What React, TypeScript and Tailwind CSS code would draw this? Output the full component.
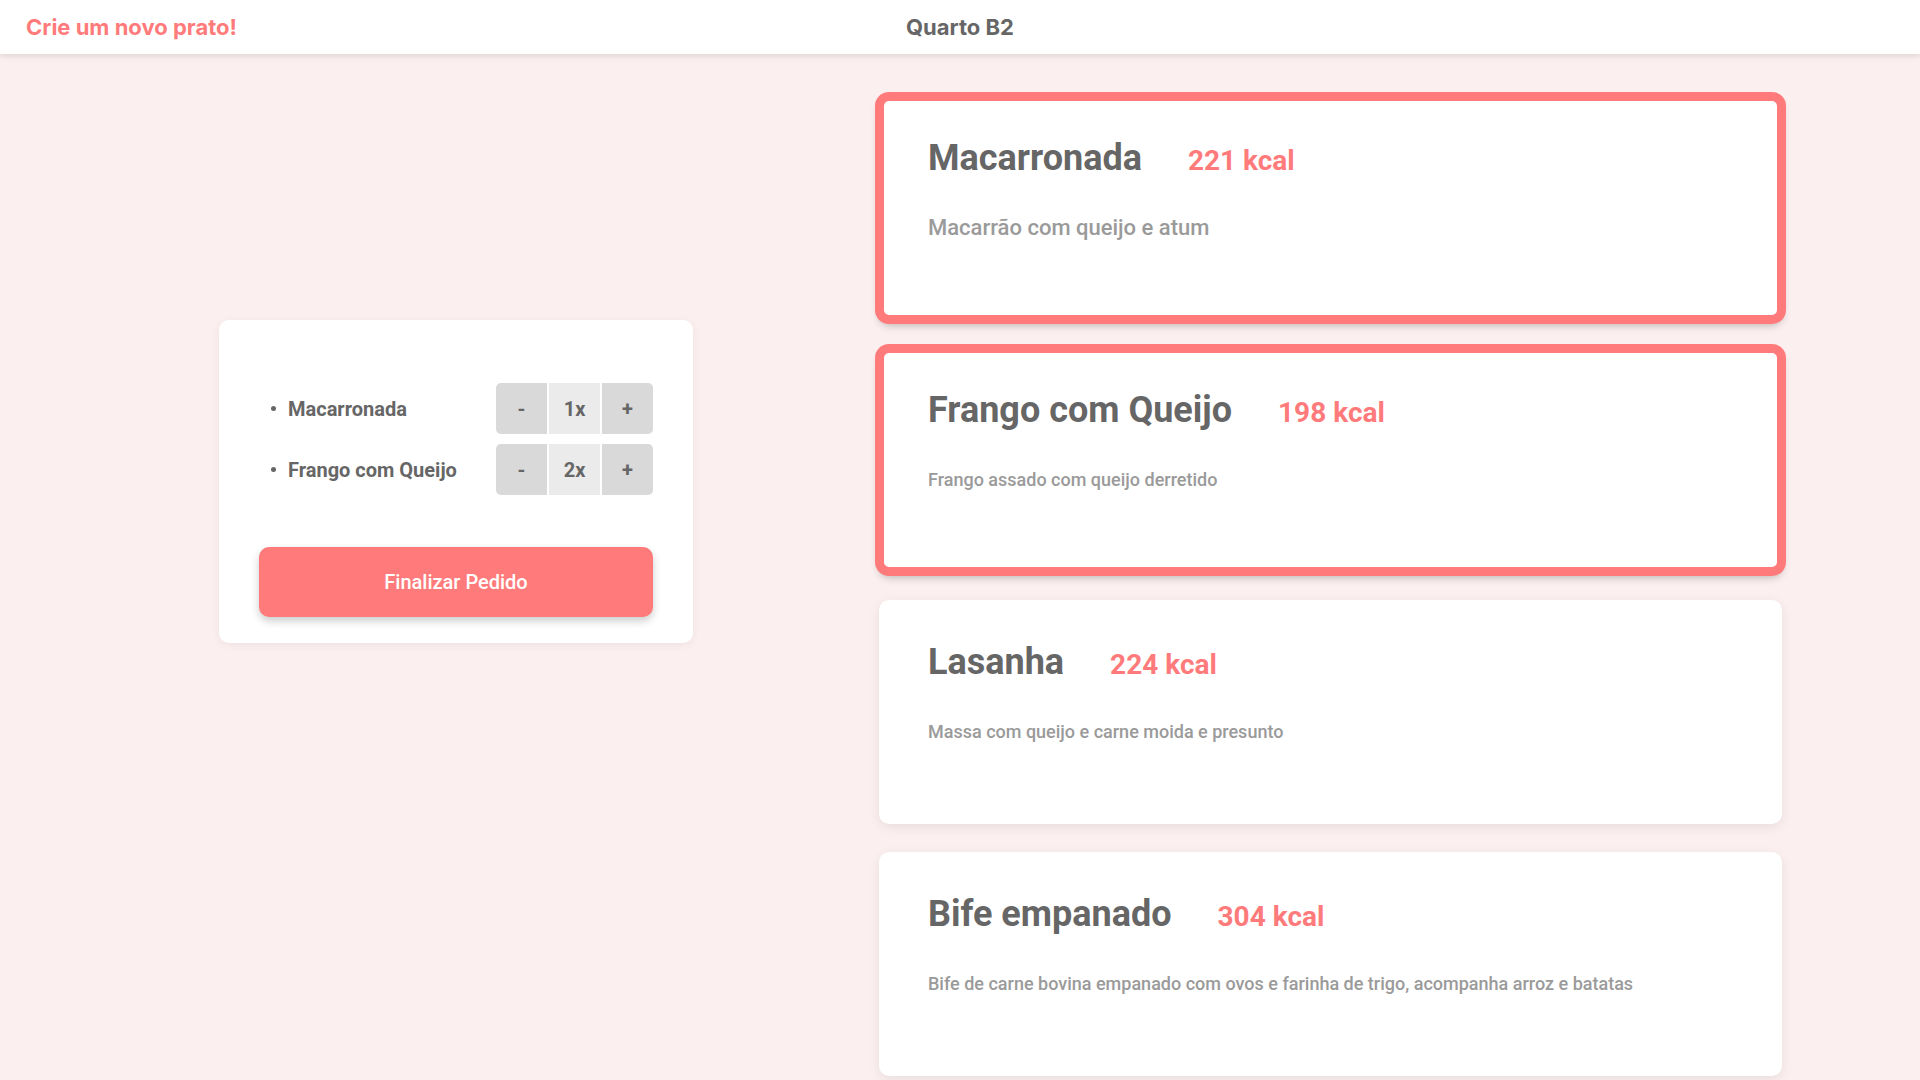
import { useState } from "react";

type Dish = {
  name: string;
  kcal: number;
  description: string;
};

const dishes: Dish[] = [
  { name: "Macarronada", kcal: 221, description: "Macarrão com queijo e atum" },
  { name: "Frango com Queijo", kcal: 198, description: "Frango assado com queijo derretido" },
  { name: "Lasanha", kcal: 224, description: "Massa com queijo e carne moida e presunto" },
  {
    name: "Bife empanado",
    kcal: 304,
    description: "Bife de carne bovina empanado com ovos e farinha de trigo, acompanha arroz e batatas",
  },
];

export default function App() {
  // quantities per dish name, only the selected ones show up in the order
  const [order, setOrder] = useState<Record<string, number>>({
    Macarronada: 1,
    "Frango com Queijo": 2,
  });

  const changeQty = (name: string, delta: number) => {
    setOrder((prev) => {
      const next = { ...prev };
      const qty = (next[name] ?? 0) + delta;
      if (qty <= 0) delete next[name];
      else next[name] = qty;
      return next;
    });
  };

  const toggleDish = (name: string) => {
    setOrder((prev) => {
      const next = { ...prev };
      if (next[name]) delete next[name];
      else next[name] = 1;
      return next;
    });
  };

  return (
    <div className="min-h-screen bg-[#fbf0ef] font-['Roboto',sans-serif]">
      {/* Top bar */}
      <header className="grid h-[54px] grid-cols-3 items-center bg-white px-[26px] shadow-[0_2px_6px_rgba(0,0,0,0.12)] font-['Inter',sans-serif]">
        <span className="text-[22px] font-bold text-[#ff7b7b]">Crie um novo prato!</span>
        <span className="text-center text-[22px] font-bold text-[#666666]">Quarto B2</span>
        <span />
      </header>

      <main className="flex">
        {/* Order summary */}
        <section className="w-[879px] shrink-0">
          <div className="ml-[219px] mt-[266px] w-[474px] rounded-[10px] bg-white px-10 pb-[26px] pt-[63px] shadow-[0_2px_10px_rgba(0,0,0,0.06)]">
            <ul className="flex flex-col gap-[10px]">
              {Object.entries(order).map(([name, qty]) => (
                <li key={name} className="flex h-[51px] items-center justify-between">
                  <div className="flex items-center pl-[12px]">
                    <span className="mr-[12px] h-[5px] w-[5px] rounded-full bg-[#666666]" />
                    <span className="text-[20px] font-bold text-[#666666]">{name}</span>
                  </div>
                  <div className="flex h-[51px] gap-[2px] text-[20px] font-bold text-[#666666]">
                    <button
                      onClick={() => changeQty(name, -1)}
                      className="w-[51px] rounded-l-[5px] bg-[#d9d9d9]"
                    >
                      -
                    </button>
                    <span className="flex w-[51px] items-center justify-center bg-[#ebebeb]">{qty}x</span>
                    <button
                      onClick={() => changeQty(name, 1)}
                      className="w-[51px] rounded-r-[5px] bg-[#d9d9d9]"
                    >
                      +
                    </button>
                  </div>
                </li>
              ))}
            </ul>
            <button className="mt-[52px] h-[70px] w-full rounded-[10px] bg-[#ff7b7b] text-[20px] font-medium text-white shadow-[0_4px_8px_rgba(0,0,0,0.2)]">
              Finalizar Pedido
            </button>
          </div>
        </section>

        {/* Dishes list */}
        <section className="flex w-[903px] flex-col gap-[28px] pb-10 pt-[42px]">
          {dishes.map((dish, i) => {
            const selected = order[dish.name] !== undefined;
            return (
              <div
                key={dish.name}
                onClick={() => toggleDish(dish.name)}
                className={
                  selected
                    ? "h-[224px] cursor-pointer rounded-[10px] border-[5px] border-[#ff7b7b] bg-white px-[44px] pt-[33px] ring-4 ring-[#ff7b7b] shadow-[0_5px_9px_rgba(0,0,0,0.28)]"
                    : "h-[224px] cursor-pointer rounded-[10px] border-[5px] border-white bg-white px-[44px] pt-[33px] shadow-[0_3px_12px_rgba(0,0,0,0.08)]"
                }
              >
                <div className="flex h-[48px] items-baseline">
                  <h2 className="text-[36px] font-bold leading-[48px] text-[#666666]">{dish.name}</h2>
                  <span className="ml-[46px] text-[28px] font-bold text-[#ff7b7b]">{dish.kcal} kcal</span>
                </div>
                <p
                  className={
                    i === 0
                      ? "mt-[34px] text-[22px] font-medium leading-[24px] text-[#9a9a9a]"
                      : "mt-[34px] text-[18px] font-medium leading-[24px] text-[#9a9a9a]"
                  }
                >
                  {dish.description}
                </p>
              </div>
            );
          })}
        </section>
      </main>
    </div>
  );
}
